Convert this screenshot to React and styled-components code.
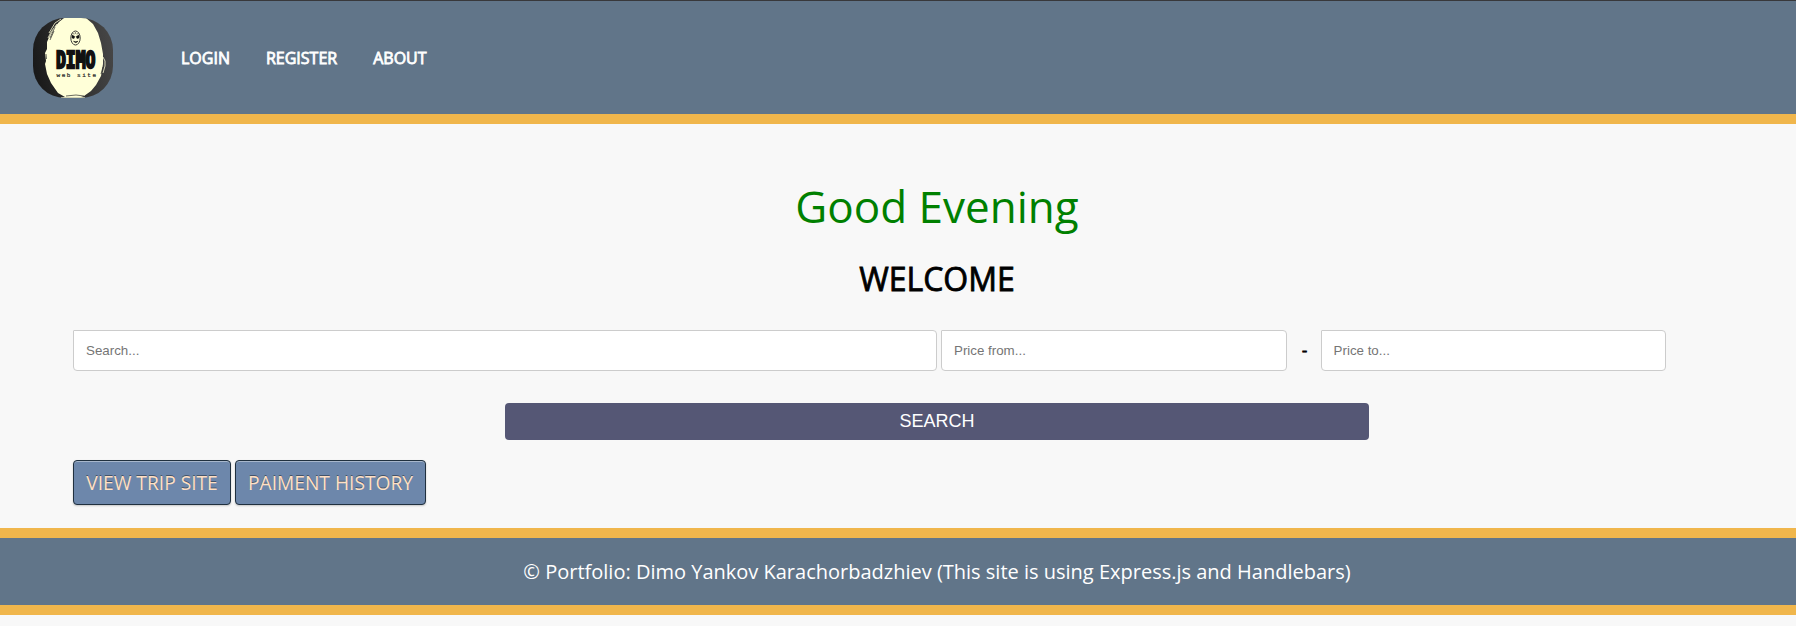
import React from "react";
import styled, { createGlobalStyle } from "styled-components";

const sans = `"Open Sans", "Noto Sans", sans-serif`;
const arial = `"Liberation Sans", Arial, sans-serif`;

const GlobalStyle = createGlobalStyle`
  *, *::before, *::after { box-sizing: border-box; }
  html { overflow: hidden; background: #f8f8f8; }
  body { margin: 0; font-family: ${sans}; background: #f8f8f8; color: #000; }
`;

const Page = styled.div`
  width: 100%;
  min-height: 626px;
  overflow: hidden;
`;

const Header = styled.header`
  display: flex;
  align-items: center;
  height: 124px;
  padding: 0 0 0 33px;
  background: #617589;
  border-top: 1px solid #38383b;
  border-bottom: 10px solid #f0b64c;
`;

const Logo = styled.svg`
  display: block;
  width: 80px;
  height: 80px;
  margin-top: 1px;
  border-radius: 32px;
`;

const Nav = styled.nav`
  display: flex;
  gap: 36px;
  margin: 1px 0 0 68px;
`;

const NavLink = styled.a`
  color: #fff;
  font-size: 16px;
  line-height: 22px;
  -webkit-text-stroke: 0.8px #fff;
  text-decoration: none;
`;

const Main = styled.main`
  width: 1728px;
  height: 404px;
  margin-left: 73px;
`;

const Greeting = styled.h1`
  margin: 0;
  padding-top: 53px;
  color: #008000;
  font-size: 44px;
  font-weight: 400;
  line-height: 58px;
  text-align: center;
`;

const Welcome = styled.h2`
  margin: 22px 0 0;
  font-size: 32px;
  font-weight: 400;
  line-height: 44px;
  text-align: center;
  -webkit-text-stroke: 0.8px #000;
`;

const SearchForm = styled.form`
  display: flex;
  flex-direction: column;
  margin-top: 29px;
`;

const Fields = styled.div`
  display: flex;
  align-items: center;
`;

const Input = styled.input`
  width: ${(p) => p.$width}px;
  height: 41px;
  margin: 0 ${(p) => p.$gap || 0}px 0 0;
  padding: 0 12px;
  border: 1px solid #ccc;
  border-radius: 1px 4px 4px 4px;
  background: #fff;
  font-family: ${arial};
  font-size: 13.333px;
  &::placeholder { color: #757575; opacity: 1; }
`;

const Dash = styled.span`
  width: 34px;
  padding: 0 0 2px 2px;
  font-size: 16px;
  line-height: 22px;
  text-align: center;
  -webkit-text-stroke: 0.8px #000;
`;

const SearchButton = styled.button`
  align-self: center;
  width: 864px;
  height: 37px;
  margin-top: 32px;
  padding: 0;
  border: 0;
  border-radius: 4px;
  background: #555775;
  color: #fff;
  font-family: ${arial};
  font-size: 18px;
`;

const Actions = styled.div`
  display: flex;
  gap: 4px;
  margin-top: 20px;
`;

const ActionLink = styled.a`
  display: flex;
  align-items: center;
  justify-content: center;
  width: ${(p) => p.$width}px;
  height: 45px;
  border: 1px solid #20303f;
  border-radius: 4px;
  background: #6d87ab;
  box-shadow: inset 0 1px 0 rgba(255, 255, 255, 0.4), 0 1px 2px rgba(0, 0, 0, 0.2);
  color: #ffe0c4;
  font-size: 19.2px;
  line-height: 26px;
  text-shadow: 0 -1px 0 rgba(0, 0, 0, 0.4);
  text-decoration: none;
  white-space: nowrap;
`;

const Footer = styled.footer`
  height: 87px;
  background: #617589;
  border-top: 10px solid #f0b64c;
  border-bottom: 10px solid #f0b64c;
`;

const Copyright = styled.p`
  width: 1728px;
  margin: 0 0 0 73px;
  color: #fff;
  font-size: 20px;
  line-height: 67px;
  text-align: center;
`;

function DimoLogo() {
  return (
    <Logo viewBox="0 0 80 80" role="img" aria-label="Dimo web site">
      <defs>
        <linearGradient id="disc" x1="0" x2="1" y1="0.6" y2="0.4">
          <stop offset="0" stopColor="#191919" />
          <stop offset="0.2" stopColor="#222" />
          <stop offset="1" stopColor="#464646" />
        </linearGradient>
      </defs>
      <rect width="80" height="80" fill="url(#disc)" />
      <path
        fill="#ffffd8"
        d="M31 0H53L60 6L65 15L68 25L70 36L70 46L68 58L63 67L58 73L51 78L48 79H32L25 75L18 65L14 56L12 46L13 43L12 35L14 31L14 24L17 17L21 10L26 4Z"
      />
      <path
        fill="none"
        stroke="#ffffd8"
        strokeWidth="0.8"
        d="M28 1L22 5L16 15M24 6L18 14L15 20M70 39L72 43L72 48L70 55M28 79.5H52"
      />
      <path
        fill="none"
        stroke="#292929"
        strokeWidth="0.7"
        d="M22 9L17 20M21 13L17 22M70 49L68 56M13 36L13.5 41M33 78L43 77L51 78"
      />
      <ellipse cx="42.5" cy="20" rx="4.7" ry="7" fill="none" stroke="#292929" strokeWidth="0.9" />
      <path fill="#111" stroke="#111" strokeWidth="0.5" d="M39 17L41.8 18.5L41 20.5L39 20ZM46 17L43.2 18.5L44 20.5L46 20ZM40.5 23.3Q42.7 24 45 23.3Q42.8 26 40.5 23.3" />
      <path fill="none" stroke="#333" strokeWidth="0.6" d="M39.5 15.5L41.5 16M45.5 15.5L43.5 16M42.4 14V16" />
      <text
        x="23"
        y="50.4"
        fill="#111"
        stroke="#111"
        strokeWidth="2.3"
        fontFamily='"DejaVu Sans Mono", monospace'
        fontWeight="700"
        fontSize="23.5"
        textLength="39.5"
        lengthAdjust="spacingAndGlyphs"
      >
        DIMO
      </text>
      <text
        x="23.5"
        y="59"
        fill="#252525"
        stroke="#252525"
        strokeWidth="0.2"
        fontFamily='"Liberation Mono", monospace'
        fontSize="6"
        textLength="39.5"
      >
        web site
      </text>
    </Logo>
  );
}

export default function App() {
  return (
    <>
      <GlobalStyle />
      <Page>
        <Header>
          <DimoLogo />
          <Nav>
            <NavLink>LOGIN</NavLink>
            <NavLink>REGISTER</NavLink>
            <NavLink>ABOUT</NavLink>
          </Nav>
        </Header>
        <Main>
          <Greeting>Good Evening</Greeting>
          <Welcome>WELCOME</Welcome>
          <SearchForm onSubmit={(e) => e.preventDefault()}>
            <Fields>
              <Input $width={864} $gap={4} placeholder="Search..." />
              <Input $width={345.6} placeholder="Price from..." />
              <Dash>-</Dash>
              <Input $width={345.6} placeholder="Price to..." />
            </Fields>
            <SearchButton>SEARCH</SearchButton>
          </SearchForm>
          <Actions>
            <ActionLink $width={158}>VIEW TRIP SITE</ActionLink>
            <ActionLink $width={191}>PAIMENT HISTORY</ActionLink>
          </Actions>
        </Main>
        <Footer>
          <Copyright>© Portfolio: Dimo Yankov Karachorbadzhiev (This site is using Express.js and Handlebars)</Copyright>
        </Footer>
      </Page>
    </>
  );
}
